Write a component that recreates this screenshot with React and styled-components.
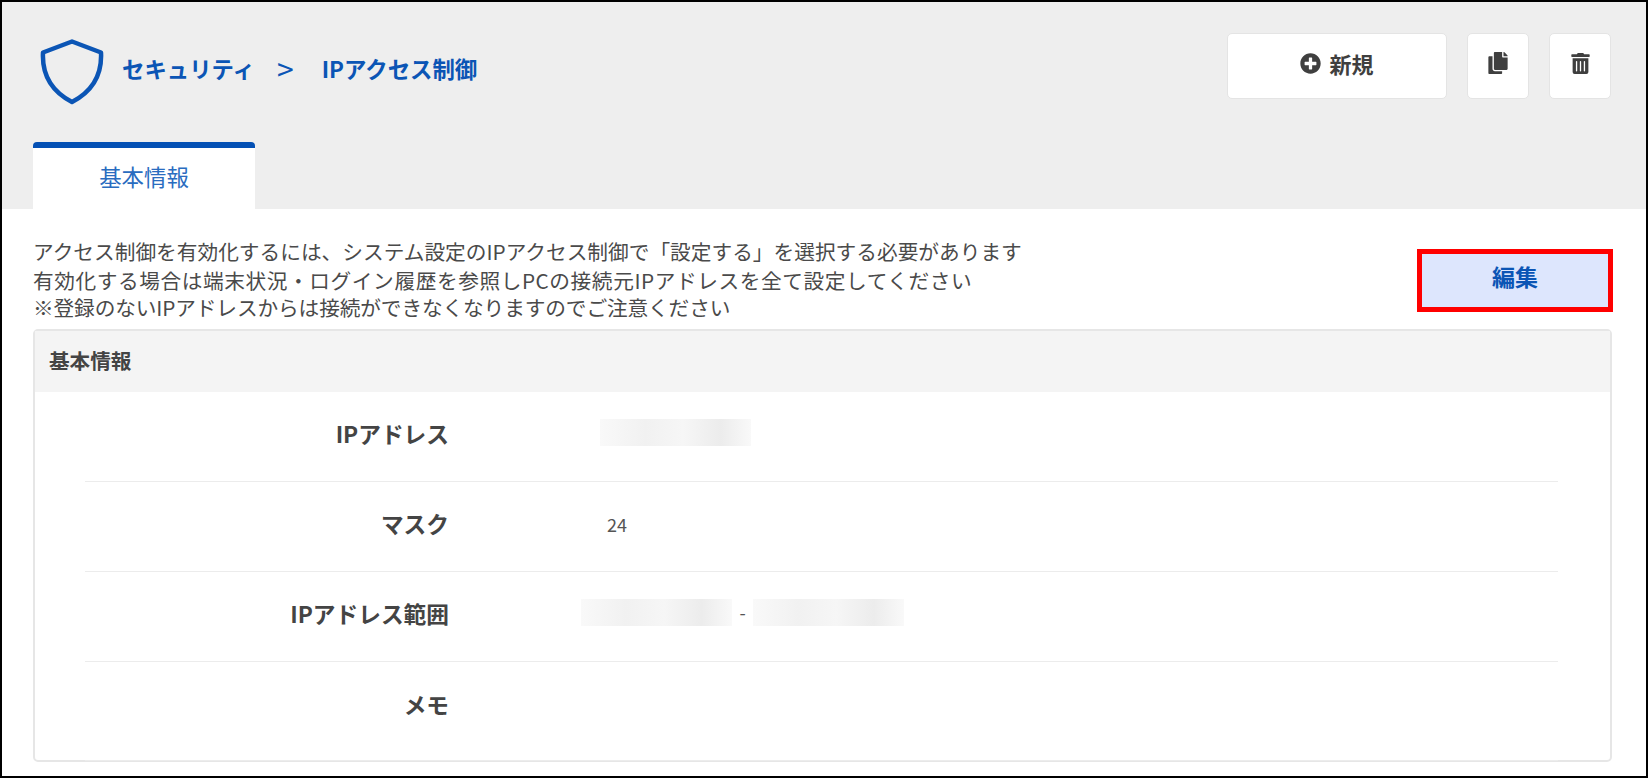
import React from 'react'
import styled, { createGlobalStyle } from 'styled-components'
import { FaPlusCircle, FaCopy, FaTrashAlt } from 'react-icons/fa'

const GlobalStyle = createGlobalStyle`
  html, body {
    margin: 0;
    padding: 0;
    background: #fff;
  }
  body {
    font-family: "Noto Sans CJK JP", "Noto Sans", sans-serif;
    color: #444;
  }
`

const ShieldIcon = () => (
  <Shield viewBox="0 0 64 66" aria-hidden="true">
    <path
      d="M32 2.5 L61 13.5 C62 33 55 51 32 63 C9 51 2 33 3 13.5 Z"
      fill="none"
      stroke="#0b55b5"
      strokeWidth="4.5"
      strokeLinejoin="round"
    />
  </Shield>
)

const rows = [
  { label: 'IPアドレス', start: 152, blurs: 1 },
  { label: 'マスク', start: 159, text: '24' },
  { label: 'IPアドレス範囲', start: 133, blurs: 2 },
  { label: 'メモ', start: 159, last: true },
]

export default function App() {
  return (
    <Frame>
      <GlobalStyle />
      <Header>
        <TopBar>
          <Title>
            <ShieldIcon />
            <Crumb>セキュリティ</Crumb>
            <CrumbSep>&gt;</CrumbSep>
            <Crumb>IPアクセス制御</Crumb>
          </Title>
          <Actions>
            <ActionButton $wide>
              <FaPlusCircle size={21} />
              新規
            </ActionButton>
            <ActionButton>
              <FaCopy size={22} />
            </ActionButton>
            <ActionButton>
              <FaTrashAlt size={21} />
            </ActionButton>
          </Actions>
        </TopBar>
        <Tab>基本情報</Tab>
      </Header>
      <Content>
        <NoticeRow>
          <Notice>
            <NoticeLine>アクセス制御を有効化するには、システム設定のIPアクセス制御で「設定する」を選択する必要があります</NoticeLine>
            <NoticeLine $track={0.57} $shift={1}>有効化する場合は端末状況・ログイン履歴を参照しPCの接続元IPアドレスを全て設定してください</NoticeLine>
            <NoticeLine $track={-0.13}>※登録のないIPアドレスからは接続ができなくなりますのでご注意ください</NoticeLine>
          </Notice>
          <EditButton>編集</EditButton>
        </NoticeRow>
        <Card>
          <CardHeader>基本情報</CardHeader>
          {rows.map((row) => (
            <Row key={row.label} $last={row.last}>
              <Label>{row.label}</Label>
              <Value $start={row.start}>
                {row.text}
                {row.blurs >= 1 && <Blurred />}
                {row.blurs === 2 && <Dash>-</Dash>}
                {row.blurs === 2 && <Blurred />}
              </Value>
            </Row>
          ))}
        </Card>
      </Content>
    </Frame>
  )
}

const Frame = styled.div`
  box-sizing: border-box;
  width: 1648px;
  height: 778px;
  border: 2px solid #000;
  background: #fff;
  overflow: hidden;
`

const Header = styled.header`
  height: 207px;
  background: #eee;
  display: flex;
  flex-direction: column;
  justify-content: space-between;
`

const TopBar = styled.div`
  display: flex;
  justify-content: space-between;
  align-items: flex-start;
  padding: 31px 35px 0 38px;
`

const Title = styled.div`
  display: flex;
  align-items: center;
  height: 66px;
  margin-top: 6px;
`

const Shield = styled.svg`
  width: 64px;
  height: 66px;
  margin-right: 18px;
`

const Crumb = styled.span`
  font-size: 22.4px;
  font-weight: 700;
  color: #0b55b5;
  margin-top: -9px;
`

const CrumbSep = styled(Crumb)`
  font-weight: 400;
  font-size: 30px;
  margin: -9px 28px 0 22px;
`

const Actions = styled.div`
  display: flex;
  gap: 20px;
`

const ActionButton = styled.button`
  box-sizing: border-box;
  width: ${(p) => (p.$wide ? '220px' : '62px')};
  height: 66px;
  padding: 0 0 6px;
  display: flex;
  align-items: center;
  justify-content: center;
  gap: 8px;
  background: #fff;
  border: 1px solid #e4e4e4;
  border-radius: 5px;
  color: #3f3f3f;
  font-family: inherit;
  font-size: 22px;
  font-weight: 700;
`

const Tab = styled.div`
  box-sizing: border-box;
  width: 222px;
  height: 67px;
  margin-left: 31px;
  padding-bottom: 5px;
  display: flex;
  align-items: center;
  justify-content: center;
  background: #fff;
  border-top: 6px solid #0450b4;
  border-radius: 4px 4px 0 0;
  color: #2a6cbf;
  font-size: 22.4px;
`

const Content = styled.main`
  padding: 0 33px 0 31px;
`

const NoticeRow = styled.div`
  display: flex;
  justify-content: space-between;
  align-items: flex-start;
  height: 120px;
`

const Notice = styled.div`
  padding-top: 28px;
  font-size: 20.7px;
  line-height: 28px;
  color: #4a4a4a;
  white-space: nowrap;
`

const NoticeLine = styled.div`
  letter-spacing: ${(p) => p.$track || 0}px;
  margin-top: ${(p) => p.$shift || 0}px;
  margin-bottom: ${(p) => -(p.$shift || 0)}px;
`

const EditButton = styled.button`
  box-sizing: border-box;
  width: 196px;
  height: 63px;
  margin-top: 40px;
  padding: 0 0 9px;
  background: #dde6fd;
  border: 5px solid #f00;
  color: #0b55b5;
  font-family: inherit;
  font-size: 23px;
  font-weight: 700;
`

const Card = styled.section`
  box-sizing: border-box;
  width: 1579px;
  height: 433px;
  border: 2px solid #e6e6e6;
  border-radius: 5px;
`

const CardHeader = styled.div`
  height: 61px;
  padding: 0 0 4px 14px;
  box-sizing: border-box;
  display: flex;
  align-items: center;
  background: #f4f4f4;
  color: #444;
  font-size: 20.6px;
  font-weight: 700;
`

const Row = styled.div`
  display: flex;
  align-items: center;
  box-sizing: border-box;
  height: ${(p) => (p.$last ? '99px' : '90px')};
  margin: 0 52px 0 50px;
  padding-bottom: ${(p) => (p.$last ? '13px' : '6px')};
  border-bottom: 1px solid #ececec;
`

const Label = styled.div`
  width: 364px;
  flex: none;
  text-align: right;
  font-size: 22.7px;
  font-weight: 700;
  color: #444;
`

const Value = styled.div`
  display: flex;
  align-items: center;
  padding-left: ${(p) => p.$start - 1}px;
  font-size: 18px;
  color: #555;
`

const Blurred = styled.span`
  display: block;
  width: 151px;
  height: 27px;
  margin-top: -3px;
  background: linear-gradient(90deg, #f9f9f9 0%, #f1f1f1 30%, #f6f6f6 55%, #ececec 80%, #f9f9f9 100%);
`

const Dash = styled.span`
  width: 21px;
  margin-top: -3px;
  text-align: center;
`
